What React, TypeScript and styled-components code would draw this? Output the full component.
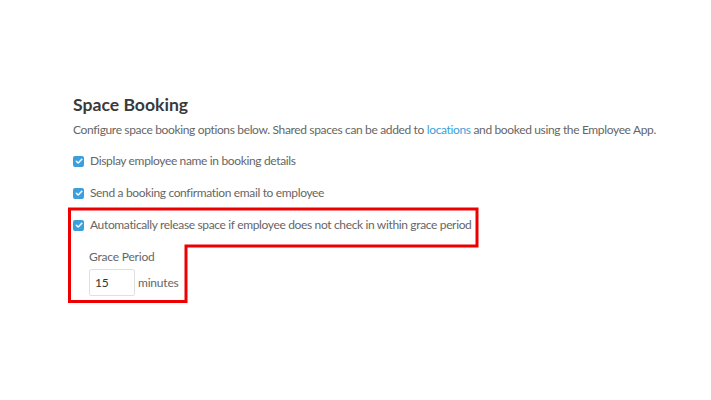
import styled, { createGlobalStyle } from 'styled-components';

const GlobalStyle = createGlobalStyle`
  html, body {
    margin: 0;
    padding: 0;
    background: #ffffff;
  }
  body {
    font-family: Lato, 'Noto Sans', sans-serif;
    color: #555;
  }
`;

const Page = styled.div`
  position: relative;
  width: 711px;
  height: 400px;
  box-sizing: border-box;
  padding: 94px 0 0 73px;
`;

const Title = styled.h2`
  margin: 0;
  font-size: 17.6px;
  font-weight: 700;
  color: #3a3a3a;
  line-height: 22px;
`;

const Description = styled.p`
  margin: 6px 0 0;
  font-size: 12px;
  letter-spacing: -0.35px;
  line-height: 16px;
  color: #666;
  white-space: nowrap;
`;

const Link = styled.a`
  color: #3b9fdc;
  text-decoration: none;
`;

const Options = styled.div`
  display: flex;
  flex-direction: column;
  gap: 16px;
  margin-top: 15px;
`;

const Option = styled.label`
  display: flex;
  align-items: center;
  gap: 6px;
  font-size: 12px;
  letter-spacing: -0.35px;
  line-height: 16px;
  color: #666;
`;

const Box = styled.span`
  width: 11px;
  height: 11px;
  border-radius: 2px;
  background: #3b9fdc;
  display: flex;
  align-items: center;
  justify-content: center;
  flex-shrink: 0;
`;

const Grace = styled.div`
  display: flex;
  flex-direction: column;
  gap: 4px;
  margin: 0 0 0 16px;
`;

const GraceLabel = styled.div`
  font-size: 12px;
  letter-spacing: -0.2px;
  line-height: 16px;
  color: #666;
`;

const GraceRow = styled.div`
  display: flex;
  align-items: center;
  gap: 3px;
  font-size: 12px;
  letter-spacing: -0.2px;
  color: #666;
`;

const MinutesInput = styled.div`
  width: 46px;
  height: 27px;
  box-sizing: border-box;
  border: 1px solid #e0e0e0;
  border-radius: 2px;
  padding: 0 5px;
  display: flex;
  align-items: center;
  font-size: 12px;
  color: #333;
`;

const Annotation = styled.svg`
  position: absolute;
  left: 0;
  top: 0;
  pointer-events: none;
`;

const Check = () => (
  <Box>
    <svg width="8" height="8" viewBox="0 0 8 8">
      <path d="M1.3 4.2 L3.2 6 L6.8 2.2" fill="none" stroke="#fff" strokeWidth="1.5" strokeLinecap="round" strokeLinejoin="round" />
    </svg>
  </Box>
);

const App = () => (
  <>
    <GlobalStyle />
    <Page>
      <Title>Space Booking</Title>
      <Description>
        Configure space booking options below. Shared spaces can be added to <Link>locations</Link> and booked using the
        Employee App.
      </Description>
      <Options>
        <Option>
          <Check />
          Display employee name in booking details
        </Option>
        <Option>
          <Check />
          Send a booking confirmation email to employee
        </Option>
        <Option>
          <Check />
          Automatically release space if employee does not check in within grace period
        </Option>
        <Grace>
          <GraceLabel>Grace Period</GraceLabel>
          <GraceRow>
            <MinutesInput>15</MinutesInput>
            minutes
          </GraceRow>
        </Grace>
      </Options>
      <Annotation width="711" height="400">
        <polygon points="69.5,209 477,209 477,246 186,246 186,301.5 69.5,301.5" fill="none" stroke="#ee0000" strokeWidth="3" />
      </Annotation>
    </Page>
  </>
);

export default App;
